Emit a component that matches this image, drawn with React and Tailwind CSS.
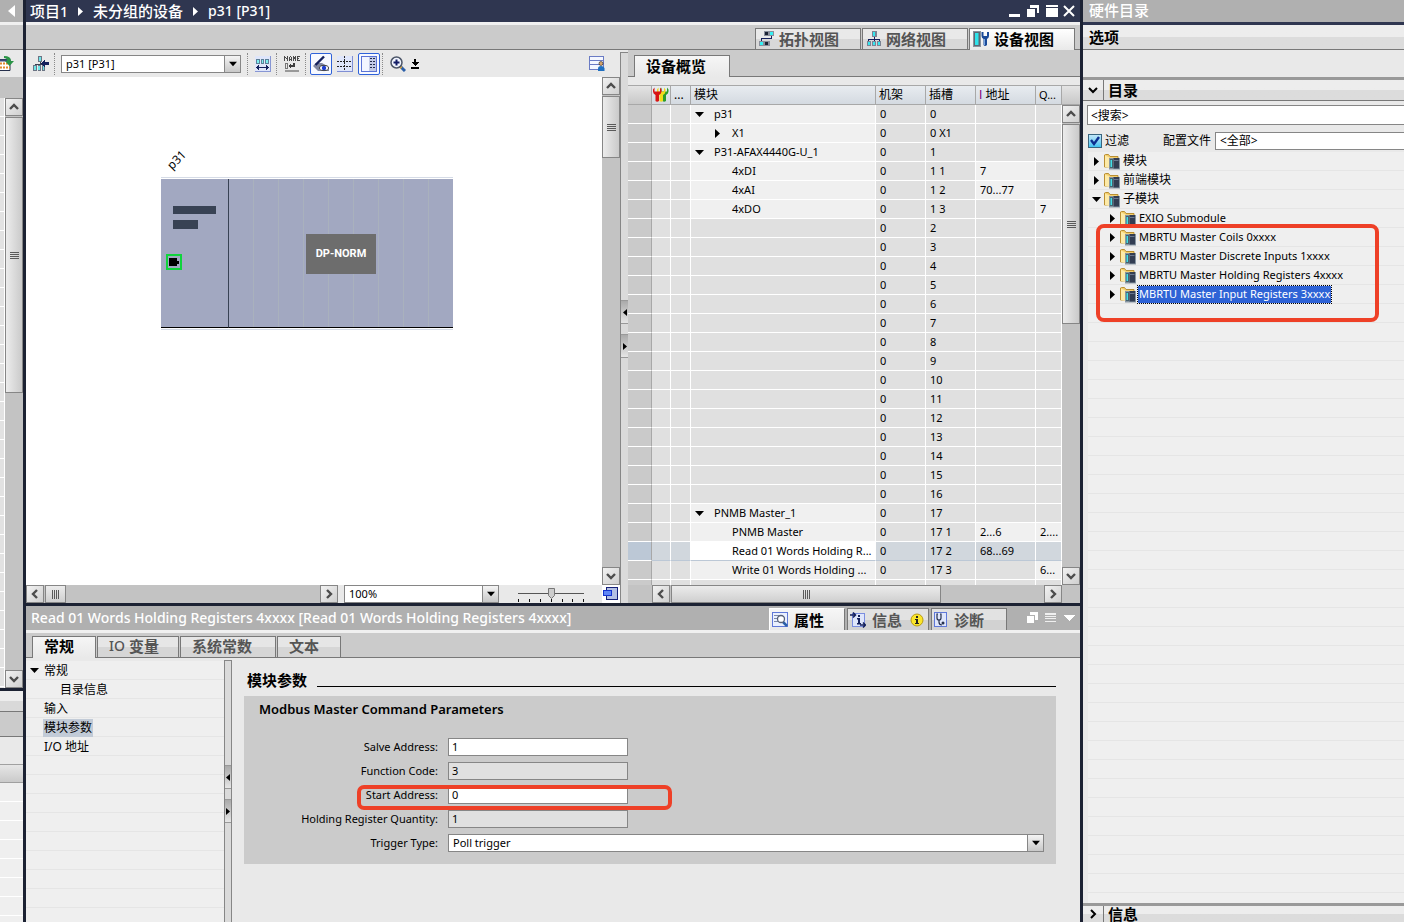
import React, { useState } from 'react';

const rows = [
  { name: 'p31', level: 0, arrow: 'down', rack: '0', slot: '0' },
  { name: 'X1', level: 1, arrow: 'right', rack: '0', slot: '0 X1' },
  { name: 'P31-AFAX4440G-U_1', level: 0, arrow: 'down', rack: '0', slot: '1' },
  { name: '4xDI', level: 1, rack: '0', slot: '1 1', iAddr: '7' },
  { name: '4xAI', level: 1, rack: '0', slot: '1 2', iAddr: '70...77' },
  { name: '4xDO', level: 1, rack: '0', slot: '1 3', qAddr: '7' },
  ...Array.from({ length: 15 }, (_, i) => ({ name: '', level: 0, rack: '0', slot: String(i + 2) })),
  { name: 'PNMB Master_1', level: 0, arrow: 'down', rack: '0', slot: '17' },
  { name: 'PNMB Master', level: 1, rack: '0', slot: '17 1', iAddr: '2...6', qAddr: '2....' },
  { name: 'Read 01 Words Holding R...', level: 1, rack: '0', slot: '17 2', iAddr: '68...69', selected: true },
  { name: 'Write 01 Words Holding ...', level: 1, rack: '0', slot: '17 3', qAddr: '6...' },
  { name: '', level: 0, rack: '', slot: '' },
];

const catalog = [
  { name: '模块', arrow: 'right' },
  { name: '前端模块', arrow: 'right' },
  { name: '子模块', arrow: 'down' },
  { name: 'EXIO Submodule', arrow: 'right', child: true },
  { name: 'MBRTU Master Coils 0xxxx', arrow: 'right', child: true },
  { name: 'MBRTU Master Discrete Inputs 1xxxx', arrow: 'right', child: true },
  { name: 'MBRTU Master Holding Registers 4xxxx', arrow: 'right', child: true },
  { name: 'MBRTU Master Input Registers 3xxxx', arrow: 'right', child: true },
];

const fields = [
  { id: 'slave', label: 'Salve Address:', value: '1' },
  { id: 'func', label: 'Function Code:', value: '3', readOnly: true },
  { id: 'start', label: 'Start Address:', value: '0', marked: true },
  { id: 'qty', label: 'Holding Register Quantity:', value: '1', readOnly: true },
];

const Arrow = ({ dir, className = '' }) => (
  <svg width="9" height="9" viewBox="0 0 9 9" className={`shrink-0 ${className}`} fill="currentColor">
    {dir === 'down' && <path d="M0 2h9L4.5 7z" />}
    {dir === 'right' && <path d="M2 0v9l5-4.5z" />}
    {dir === 'left' && <path d="M7 0v9L2 4.5z" />}
  </svg>
);

const ScrollButton = ({ dir }) => {
  const paths = {
    up: 'M4 10l4-4 4 4',
    down: 'M4 6l4 4 4-4',
    left: 'M10 4L6 8l4 4',
    right: 'M6 4l4 4-4 4',
  };
  return (
    <button aria-label={dir} className="w-[18px] h-[18px] shrink-0 border border-[#868686] bg-linear-to-br from-[#f2f2f2] to-[#cfcfcf] flex items-center justify-center">
      <svg width="16" height="16" viewBox="0 0 16 16" fill="none" stroke="#4c4c4c" strokeWidth="2.4">
        <path d={paths[dir]} />
      </svg>
    </button>
  );
};

const Thumb = ({ vertical, className = '', grip = true }) => (
  <div
    className={`shrink-0 border border-[#868686] flex items-center justify-center ${
      vertical ? 'w-[18px] bg-linear-to-r from-[#ececec] to-[#cacaca]' : 'h-[18px] bg-linear-to-b from-[#ececec] to-[#cfcfcf]'
    } ${className}`}
  >
    {grip && (
      <svg width="9" height="9" viewBox="0 0 9 9" fill="#5a5a5a">
        {[0, 2, 4, 6].map((n) => (vertical ? <rect key={n} x="0" y={n + 1} width="9" height="1" /> : <rect key={n} x={n + 1} y="0" width="1" height="9" />))}
      </svg>
    )}
  </div>
);

const Combo = ({ label, options, className = '' }) => (
  <div className={`relative h-[18px] border border-[#868686] bg-white ${className}`}>
    <select aria-label={label} className="block w-full h-full appearance-none bg-transparent pl-1 text-[11px] leading-4 outline-none">
      {options.map((o) => (
        <option key={o}>{o}</option>
      ))}
    </select>
    <span className="absolute inset-y-0 right-0 w-4 border-l border-[#868686] bg-linear-to-b from-[#f4f4f4] to-[#c8c8c8] flex items-center justify-center pointer-events-none">
      <Arrow dir="down" className="w-2 h-2" />
    </span>
  </div>
);

const Grip = ({ dir }) => (
  <button aria-label={`collapse ${dir}`} className="w-full h-6 border-y border-[#999] bg-linear-to-b from-[#aaa] to-[#e6e6e6] flex items-center justify-center">
    <svg width="4" height="7" viewBox="0 0 4 7">
      <path d={dir === 'left' ? 'M4 0v7L0 3.5z' : 'M0 0v7l4-3.5z'} />
    </svg>
  </button>
);

const Splitter = ({ className = '' }) => (
  <div className={`w-2 shrink-0 border-l border-t border-l-[#868686] border-t-[#868686] bg-[#dadada] flex flex-col items-center gap-[10px] ${className}`}>
    <Grip dir="left" />
    <Grip dir="right" />
  </div>
);

const Separator = () => <span className="h-[22px] border-l border-dotted border-[#8a8a8a] mr-[2px]" />;

const ToolButton = ({ label, active, children }) => (
  <button aria-label={label} className={`w-[22px] h-[22px] shrink-0 flex items-center justify-center ${active ? 'border border-[#2f62d9] rounded-xs bg-[#f7f9ff]' : ''}`}>
    {children}
  </button>
);

/* ---- icons ---- */

const TopologyIcon = () => (
  <svg width="16" height="16" viewBox="0 0 16 16" shapeRendering="crispEdges">
    <rect x="5" y="0" width="10" height="5" fill="#8a8f9c" />
    <rect x="6" y="1" width="3" height="3" fill="#1b2333" />
    <rect x="11" y="1" width="3" height="3" fill="#35f0f4" />
    <rect x="0" y="10" width="11" height="5" fill="#8a8f9c" />
    <rect x="1" y="11" width="3" height="3" fill="#35f0f4" />
    <rect x="6" y="11" width="3" height="3" fill="#1b2333" />
    <path d="M12.500 5v2.500h-10V10" fill="none" stroke="#14205c" />
  </svg>
);

const NetworkIcon = () => (
  <svg width="16" height="16" viewBox="0 0 16 16" shapeRendering="crispEdges">
    <rect x="6" y="0" width="5" height="6" fill="#7b8494" />
    <rect x="7" y="1" width="2" height="4" fill="#35e6ee" />
    <path d="M8.500 6v3M2.500 11V8.500h11V11M8.500 8v3" fill="none" stroke="#14205c" />
    <path d="M1 10h4v5H1zM6 10h4v5H6zM11 10h4v5h-4z" fill="#7b8494" />
    <path d="M2 11h2v3H2zM7 11h2v3H7zM12 11h2v3h-2z" fill="#35e6ee" />
  </svg>
);

const DeviceIcon = () => (
  <svg width="17" height="16" viewBox="0 0 17 16">
    <rect x="0.500" y="0.500" width="7" height="15" fill="#5f6873" stroke="#8a929c" />
    <rect x="2" y="2" width="3.500" height="12" fill="#2fe3ea" />
    <path d="M8.500 1v4q0 2 2 3v6q1.500 2 3.500 0V8q2-1 2-3V1h-2v4h-3.500V1z" fill="#1b4a98" />
    <path d="M11.500 8v6" stroke="#79a7e4" />
  </svg>
);

const GotoNetIcon = () => (
  <svg width="16" height="16" viewBox="0 0 16 16" shapeRendering="crispEdges">
    <rect x="5" y="0" width="4" height="6" fill="#6b7484" />
    <rect x="6" y="1" width="2" height="4" fill="#6fe6e8" />
    <path d="M7 6v3M2 11V8.500h7V11" fill="none" stroke="#3a4152" />
    <path d="M0 9h4v6H0zM4.500 9H8v6H4.500zM9 9h3v6H9z" fill="#6b7484" />
    <path d="M1 10h2v4H1zM5 10h2v4H5zM10 10h1v4h-1z" fill="#6fe6e8" />
    <path d="M8 7.500l4-4V6h4v3h-4v2.500z" fill="#14205c" />
  </svg>
);

const RackIcon = () => (
  <svg width="16" height="16" viewBox="0 0 16 16" shapeRendering="crispEdges">
    <rect width="16" height="16" fill="#8796d4" />
    <rect x="0" y="0" width="15" height="15" fill="#dfe6fa" />
    <path d="M1 3h4v5H1zM6 3h3v5H6zM10 3h4v5h-4z" fill="#5b7f98" />
    <path d="M2 4h2v3H2zM7 4h1v3H7zM11 4h2v3h-2z" fill="#7df0f0" />
    <path d="M1 11.500l3-2.500v2h7V9l3 2.500-3 2.500v-2H4v2z" fill="#14205c" />
  </svg>
);

const NameIcon = () => (
  <svg width="16" height="16" viewBox="0 0 16 16" shapeRendering="crispEdges">
    <path
      d="M0 0h1v5H0zM3 0h1v5H3zM1 1h1v1H1zM2 2h1v1H2zM5 1h1v4H5zM7 1h1v4H7zM6 0h1v1H6zM6 3h1v1H6zM9 0h1v5H9zM11 0h1v5h-1zM10 1h1v2h-1zM13 0h1v5h-1zM14 0h2v1h-2zM14 2h1v1h-1zM14 4h2v1h-2z"
      fill="#4a4a4a"
    />
    <path d="M1.500 7.500h2v5h-2z" fill="none" stroke="#777" />
    <path d="M4 10l3-3v2h2V7h2v4H7v2z" fill="#3c3c3c" />
    <path d="M1 14h14v2H1z" fill="#999" />
  </svg>
);

const PenEyeIcon = () => (
  <svg width="18" height="18" viewBox="0 0 18 18">
    <path d="M1 11l3-3h6l7 4v4H6z" fill="#8087a0" />
    <path d="M3.500 10L12 1.500" stroke="#14205c" strokeWidth="2.400" />
    <ellipse cx="12" cy="13" rx="4.500" ry="2.600" fill="#fff" stroke="#444" />
    <circle cx="12" cy="13" r="2.200" fill="#1d3fd0" />
  </svg>
);

const GridIcon = () => (
  <svg width="16" height="16" viewBox="0 0 16 16" shapeRendering="crispEdges">
    <rect width="16" height="16" fill="#7f8ed4" />
    <rect x="0" y="0" width="15" height="15" fill="#dfe6fb" />
    <path d="M0 5.500h15M0 10.500h15M7.500 0v15" stroke="#222" strokeDasharray="2 1" />
  </svg>
);

const PanelIcon = () => (
  <svg width="16" height="16" viewBox="0 0 16 16" shapeRendering="crispEdges">
    <rect width="16" height="16" fill="#5b73d6" />
    <rect x="1" y="1" width="7" height="14" fill="#f2f5ff" />
    <rect x="8" y="1" width="7" height="14" fill="#c3cbe6" />
    <path d="M9 2.500h2M12 2.500h2M9 5.500h2M12 5.500h2M9 8.500h2M12 8.500h2M9 11.500h2M12 11.500h2" stroke="#222c4c" />
  </svg>
);

const ZoomIcon = () => (
  <svg width="16" height="16" viewBox="0 0 16 16">
    <path d="M10 10l5 5" stroke="#2b5fa8" strokeWidth="3" />
    <path d="M9.500 10l2 2" stroke="#e0a83a" strokeWidth="2.500" />
    <circle cx="6.500" cy="6.500" r="5.500" fill="#f2f6ff" stroke="#4b5568" strokeWidth="1.500" />
    <path d="M6.500 3.500v6M3.500 6.500h6" stroke="#111b66" strokeWidth="2" />
  </svg>
);

const DownIcon = () => (
  <svg width="8" height="10" viewBox="0 0 8 10" shapeRendering="crispEdges">
    <path d="M3 0h2v3h3L4 7 0 3h3zM0 8h8v2H0z" />
  </svg>
);

const UserTableIcon = () => (
  <svg width="16" height="16" viewBox="0 0 16 16">
    <rect x="0.500" y="0.500" width="14" height="13" fill="#f4f7ff" stroke="#6a7bc4" />
    <path d="M1 4.500h13M1 8.500h13" stroke="#6a7bc4" />
    <circle cx="12" cy="7.500" r="2" fill="#d9a56b" stroke="#222" strokeWidth="0.600" />
    <path d="M9 15v-2.500q0-2.500 3-2.500t3.500 2.500V15z" fill="#1f6fc0" />
  </svg>
);

const WrenchesIcon = () => {
  const wrench = 'M1.500 0.500L0 2.500v2q0 2 2.500 3.500v6q1.500 1.500 3.500 0V8Q8.500 6.500 8.500 4.500v-2L7 .5v4H1.500z';
  return (
    <svg width="16" height="16" viewBox="0 0 16 16">
      <path d={wrench} fill="#2c9c2c" transform="translate(7 0)" />
      <path d={wrench} fill="#f0dc1c" transform="translate(4 0)" />
      <path d={wrench} fill="#d81414" />
    </svg>
  );
};

const FolderIcon = () => (
  <svg width="16" height="16" viewBox="0 0 16 16">
    <path d="M.5 13V1L1.500.5h3l1.500 2h8V13z" fill="#f5cf6c" stroke="#b98f33" />
    <path d="M1 13V1.500l4.500 2V14z" fill="#fdeaa8" />
    <rect x="5" y="4" width="11" height="11.500" fill="#8796a2" />
    <rect x="6" y="5" width="3" height="9" fill="#47626e" />
    <rect x="6.500" y="6" width="1.500" height="7" fill="#43dfe8" />
    <rect x="9.500" y="4" width="5.500" height="10.500" fill="#323d52" />
    <path d="M10 6.500h4.500" stroke="#6b7890" />
  </svg>
);

const PropsIcon = () => (
  <svg width="16" height="16" viewBox="0 0 16 16">
    <rect x="0.500" y="0.500" width="15" height="14" fill="#eaf0ff" stroke="#5f78d8" />
    <path d="M2 3.500h5M2 6.500h3M2 9.500h4" stroke="#7d8aa8" />
    <path d="M11 10l4 4" stroke="#2b5fa8" strokeWidth="2.500" />
    <circle cx="9" cy="7" r="3.500" fill="#fff" stroke="#566078" strokeWidth="1.300" />
  </svg>
);

const InfoTabIcon = () => (
  <svg width="16" height="16" viewBox="0 0 16 16">
    <rect x="2.500" y="1.500" width="12" height="13" fill="#dfe6fb" stroke="#7b8ee0" />
    <path d="M0 3h5M3 .5L5.500 3 3 5.500M10 13h5M13 10.500l2.500 2.500-2.500 2.500" fill="none" stroke="#14205c" strokeWidth="1.500" />
    <path d="M8 3h2v2H8zM7 6h3v5h1v1.500H7V11h1V7.500H7z" fill="#14205c" />
  </svg>
);

const DiagIcon = () => (
  <svg width="14" height="16" viewBox="0 0 14 16">
    <rect x="0.500" y="0.500" width="12" height="14" fill="#dfe6fb" stroke="#5f78d8" />
    <path d="M4 2H3v4q0 2 2 2t2-2V2H6M5 8v2q0 3 3 3" fill="none" stroke="#26304c" strokeWidth="1.200" />
    <circle cx="9" cy="11" r="1.500" fill="#26304c" />
  </svg>
);

const InfoBadge = () => (
  <svg width="14" height="14" viewBox="0 0 14 14">
    <circle cx="7" cy="7" r="6" fill="#fbe62a" stroke="#b89b15" />
    <path d="M6 3h2v2H6zM5 6h3v4h1v1H5v-1h1V7H5z" fill="#222" />
  </svg>
);

const ExportIcon = () => (
  <svg width="14" height="16" viewBox="0 0 14 16">
    <path d="M-1 3.500h11v11H-1z" fill="#fff" stroke="#26304c" />
    <path d="M0 7.500h10M0 11.500h10" stroke="#e08a2c" strokeWidth="2" strokeDasharray="2 1" />
    <path d="M0 4.500h9" stroke="#3a4a78" strokeWidth="2" />
    <path d="M4 0q7 0 7 5h3l-4.500 5L5 5h2q0-3-3-3z" fill="#2a9446" />
  </svg>
);

const FitIcon = () => (
  <svg width="16" height="16" viewBox="0 0 16 16" shapeRendering="crispEdges">
    <rect x="3.500" y="1.500" width="11" height="12" fill="#b3c0e4" stroke="#14207a" />
    <rect x="0.500" y="4.500" width="8" height="5" fill="#5f86f5" stroke="#1433d0" />
  </svg>
);

const ViewTab = ({ icon, active, children }) => (
  <button
    className={`w-[106px] border border-[#787878] flex items-center pl-[3px] pb-px gap-1 text-[15px] leading-5 font-bold ${
      active ? 'h-[22px] -mb-px border-b-0 bg-linear-to-b from-white to-[#e9e9e9] text-black' : 'h-[22px] -mb-px bg-linear-to-b from-[#e9e9e9] from-50% to-[#d8d8d8] to-50% text-[#555]'
    }`}
  >
    {icon}
    <span className="whitespace-nowrap">{children}</span>
  </button>
);

const LeftStrip = () => (
  <div className="w-[23px] shrink-0 flex flex-col overflow-hidden bg-[#e9e9e9]">
    <div className="h-[22px] shrink-0 bg-[#b0b0b0] flex items-center justify-end pr-2 text-white">
      <svg width="7" height="12" viewBox="0 0 7 12" fill="currentColor">
        <path d="M7 0v12L0 6z" />
      </svg>
    </div>
    <div className="h-[28px] shrink-0 border-t-3 border-[#f0f0f0] bg-[#cbcbcb] shadow-[inset_0_-1px_#787878]" />
    <div className="h-[27px] shrink-0 flex items-center">
      <ExportIcon />
    </div>
    <div className="h-[21px] shrink-0 bg-[#c3c3c3]" />
    <div className="flex-1 min-h-0 flex bg-[#c3c3c3]">
      <div className="w-[5px] border-r border-white bg-[repeating-linear-gradient(#e2e2e2_0_18px,#fff_18px_19px)]" />
      <div className="flex-1 flex flex-col">
        <ScrollButton dir="up" />
        <Thumb vertical className="h-[276px] mt-px" />
        <div className="flex-1" />
        <ScrollButton dir="down" />
      </div>
    </div>
    <div className="h-[234px] shrink-0 border-t-3 border-[#1c2233] flex flex-col">
      <div className="h-[21px] shrink-0 border-b border-[#787878] bg-linear-to-b from-[#ededed] from-50% to-[#d9d9d9] to-50%" />
      <div className="h-[25px] shrink-0 border-b border-[#787878] bg-[#cbcbcb]" />
      <div className="h-[27px] shrink-0" />
      <div className="h-[19px] shrink-0 border-y border-[#a0a0a0] bg-linear-to-b from-[#e6e6e6] to-[#cacaca]" />
      <div className="flex-1 bg-[repeating-linear-gradient(#efefef_0_18px,#fff_18px_19px)]" />
    </div>
  </div>
);

const DeviceCanvas = () => (
  <div className="flex-1 min-w-0 flex flex-col bg-[#e9e9e9]">
    <div className="h-[27px] shrink-0 flex items-center gap-[2px] pl-1 pr-[15px]">
      <ToolButton label="network">
        <GotoNetIcon />
      </ToolButton>
      <Separator />
      <Combo label="device" options={['p31 [P31]']} className="w-[180px] ml-[2px] mr-1" />
      <Separator />
      <ToolButton label="rack">
        <RackIcon />
      </ToolButton>
      <Separator />
      <ToolButton label="name">
        <NameIcon />
      </ToolButton>
      <Separator />
      <ToolButton label="show labels" active>
        <PenEyeIcon />
      </ToolButton>
      <ToolButton label="grid">
        <GridIcon />
      </ToolButton>
      <ToolButton label="overview" active>
        <PanelIcon />
      </ToolButton>
      <Separator />
      <ToolButton label="zoom">
        <ZoomIcon />
      </ToolButton>
      <DownIcon />
      <div className="flex-1" />
      <UserTableIcon />
    </div>

    <div className="flex-1 min-h-0 flex">
      <div className="flex-1 min-w-0 bg-white relative overflow-hidden">
        <span className="absolute left-[140px] top-[75px] -rotate-45 text-[12px] leading-4">p31</span>
        <div className="absolute left-[135px] top-[100px] w-[292px] h-[153px] border-y border-[#d5dbe6] py-px flex">
          <div className="w-[68px] bg-[#a2a8c1] border-r border-r-[#384254] border-b border-b-black pl-3 pt-[27px]">
            <div className="w-[43px] h-2 bg-[#384254]" />
            <div className="w-[25px] h-[9px] mt-[6px] bg-[#384254]" />
            <div className="-ml-[7px] mt-[25px] w-4 h-4 border-2 border-[#10d43c] bg-[#a2a8c1] flex items-center pl-px">
              <div className="w-2 h-2 bg-black" />
              <div className="w-[2px] h-[3px] bg-black" />
            </div>
          </div>
          <div className="flex-1 border-b border-black bg-[repeating-linear-gradient(to_right,#a2a8c1_0_24px,#a9b1bd_24px_25px)] pl-[77px] pt-[55px]">
            <div className="w-[70px] h-10 bg-[#6d6d6d] text-white text-[11px] font-bold font-['Roboto',sans-serif] flex items-center justify-center">DP-NORM</div>
          </div>
        </div>
      </div>
      <div className="w-[18px] flex flex-col bg-[#c3c3c3]">
        <ScrollButton dir="up" />
        <Thumb vertical className="h-[62px] mt-px" />
        <div className="flex-1" />
        <ScrollButton dir="down" />
      </div>
    </div>

    <div className="h-[18px] shrink-0 flex items-center">
      <div className="w-[312px] flex bg-[#c3c3c3]">
        <ScrollButton dir="left" />
        <Thumb className="w-[21px] ml-px" />
        <div className="flex-1" />
        <ScrollButton dir="right" />
      </div>
      <Combo label="zoom" options={['100%']} className="w-[155px] ml-[6px]" />
      <div className="relative ml-[19px] w-[66px] h-[18px]">
        <svg width="66" height="18" viewBox="0 0 66 18">
          <path d="M0 8.500h66" stroke="#555" />
          <path d="M.5 14v3M11.500 14v3M22.500 14v3M33.500 14v3M44.500 14v3M54.500 14v3M65.500 14v3" stroke="#111" />
          <path d="M30.500 3.500h6v7l-3 3-3-3z" fill="#ccc" stroke="#777" />
        </svg>
        <input type="range" aria-label="zoom level" className="absolute inset-0 w-full opacity-0" />
      </div>
      <div className="flex-1" />
      <div className="w-[18px] h-[18px] bg-white flex items-center justify-center">
        <FitIcon />
      </div>
    </div>
  </div>
);

const OverviewTable = () => {
  const th = 'h-[20px] border-y border-[#a8a8a8] border-r text-left font-normal pl-[3px] text-[12px] leading-4 whitespace-nowrap';
  const td = 'h-[19px] border-b border-r border-white pl-1 leading-4 whitespace-nowrap overflow-hidden';

  return (
    <div className="w-[452px] shrink-0 flex flex-col bg-[#e9e9e9]">
      <div className="h-[27px] shrink-0 bg-[#cbcbcb] shadow-[inset_0_-1px_#787878] flex items-end pl-[6px]">
        <button className="w-24 h-[22px] border border-b-0 border-[#787878] bg-linear-to-b from-[#f6f6f6] to-[#e9e9e9] text-[15px] leading-5 font-bold pr-3 pb-px text-center">设备概览</button>
      </div>
      <div className="flex-1 min-h-0 flex pt-2">
        <div className="flex-1 min-w-0 overflow-hidden">
          <table className="w-full table-fixed border-separate border-spacing-0 text-[11px]">
            <colgroup>
              <col className="w-[24px]" />
              <col className="w-[19px]" />
              <col className="w-[20px]" />
              <col />
              <col className="w-[50px]" />
              <col className="w-[50px]" />
              <col className="w-[60px]" />
              <col className="w-[26px]" />
            </colgroup>
            <thead className="bg-linear-to-b from-[#e9edf1] to-[#d3d9e0]">
              <tr>
                <th className={`${th} bg-linear-to-b from-[#e4e4e4] to-[#c8c8c8]`} />
                <th className={`${th} pl-px! pr-0`}>
                  <WrenchesIcon />
                </th>
                <th className={th}>...</th>
                <th className={th}>模块</th>
                <th className={th}>机架</th>
                <th className={th}>插槽</th>
                <th className={th}>
                  <span className="text-[#800080] font-['Liberation_Sans',sans-serif]">I</span> 地址
                </th>
                <th className={th}>
                  <span className="text-[11px]">Q...</span>
                </th>
              </tr>
            </thead>
            <tbody>
              {rows.map((row, index) => {
                const base = row.selected ? 'bg-[#d1d7dd] border-b-[#bcc8d6]!' : 'bg-[#e0e0e0]';
                const filled = row.selected ? base : 'bg-[#f0f0f0]';
                return (
                  <tr key={index}>
                    <td className={`${td} border-r-[#a8a8a8]! ${row.selected ? 'bg-[#bcc8d6]' : 'bg-[#cacaca]'}`} />
                    <td className={`${td} ${base}`} />
                    <td className={`${td} ${base}`} />
                    <td className={`${td} pr-0 ${row.selected ? 'bg-white border-b-[#bcc8d6]!' : row.name ? 'bg-[#f0f0f0]' : 'bg-[#e0e0e0]'}`}>
                      <div className={`flex items-center ${row.level ? 'pl-[18px]' : ''}`}>
                        <span className="w-[19px] shrink-0">{row.arrow && <Arrow dir={row.arrow} />}</span>
                        {row.name}
                      </div>
                    </td>
                    <td className={`${td} ${base}`}>{row.rack}</td>
                    <td className={`${td} ${base}`}>{row.slot}</td>
                    <td className={`${td} ${row.iAddr ? filled : base}`}>{row.iAddr}</td>
                    <td className={`${td} ${row.qAddr ? filled : base}`}>{row.qAddr}</td>
                  </tr>
                );
              })}
            </tbody>
          </table>
        </div>
        <div className="w-[18px] shrink-0 flex flex-col bg-[#c3c3c3]">
          <div className="h-[20px] shrink-0 border-y border-[#a8a8a8] bg-linear-to-b from-[#e4e4e4] to-[#c8c8c8]" />
          <ScrollButton dir="up" />
          <Thumb vertical className="h-[200px] mt-px" />
          <div className="flex-1" />
          <ScrollButton dir="down" />
        </div>
      </div>
      <div className="h-[18px] shrink-0 flex pl-6 pr-[18px] bg-[#c3c3c3]">
        <ScrollButton dir="left" />
        <Thumb className="w-[270px] ml-px" />
        <div className="flex-1" />
        <ScrollButton dir="right" />
      </div>
    </div>
  );
};

const PropTab = ({ active, className = '', children }) => (
  <button
    className={`h-[22px] border border-b-0 flex items-center gap-[6px] pl-[2px] text-[15px] leading-5 font-bold ${
      active ? 'border-white border-r-[#787878] bg-linear-to-b from-[#f6f6f6] to-[#e9e9e9]' : 'border-[#787878] bg-linear-to-b from-[#e2e2e2] from-50% to-[#d2d2d2] to-50% text-[#555]'
    } ${className}`}
  >
    {children}
  </button>
);

const Properties = () => {
  const tabs = [
    { name: '常规', size: 'w-[64px]', active: true },
    { prefix: 'IO', name: '变量', size: 'w-[82px]' },
    { name: '系统常数', size: 'w-[96px]' },
    { name: '文本', size: 'w-[64px]' },
  ];
  const nav = [
    { name: '常规', arrow: true },
    { name: '目录信息', child: true },
    { name: '输入' },
    { name: '模块参数', selected: true },
    { name: 'I/O 地址' },
  ];
  const [values, setValues] = useState({ slave: '1', func: '3', start: '0', qty: '1' });

  return (
    <div className="h-[319px] shrink-0 border-t-3 border-[#1c2233] bg-[#e9e9e9] flex flex-col">
      <div className="h-[24px] shrink-0 bg-[#b0b0b0] flex items-end pl-[5px] pr-1 text-white">
        <h2 className="flex-1 min-w-0 self-center text-[14px] leading-5 font-medium whitespace-nowrap">Read 01 Words Holding Registers 4xxxx [Read 01 Words Holding Registers 4xxxx]</h2>
        <div className="flex gap-[2px] text-black">
          <PropTab active className="w-[76px]">
            <PropsIcon />
            属性
          </PropTab>
          <PropTab className="w-[82px]">
            <InfoTabIcon />
            信息
            <span className="ml-[2px]">
              <InfoBadge />
            </span>
          </PropTab>
          <PropTab className="w-[76px]">
            <DiagIcon />
            诊断
          </PropTab>
        </div>
        <svg width="50" height="12" viewBox="0 0 50 12" className="ml-[19px] self-center" fill="#fff" shapeRendering="crispEdges">
          <path d="M4 0h8v8H9V3H4zM1 4h7v7H1z" />
          <path d="M19 1h11v2H19zM19 4h11v1H19zM19 6h11v1H19zM19 9h11v1H19z" opacity="0.800" />
          <path d="M37 3h12l-6 6z" />
        </svg>
      </div>
      <div className="h-[28px] shrink-0 border-t-3 border-[#f0f0f0] bg-[#cbcbcb] shadow-[inset_0_-1px_#787878] flex items-end pl-[6px] gap-px">
        {tabs.map((t) => (
          <button
            key={t.name}
            className={`h-[22px] border border-[#787878] text-[15px] leading-5 font-bold text-left pl-[11px] pb-[2px] flex items-center gap-1 ${t.size} ${
              t.active ? 'border-b-transparent bg-linear-to-b from-[#f6f6f6] to-[#e9e9e9] bg-origin-border' : 'bg-linear-to-b from-[#e6e6e6] from-50% to-[#d6d6d6] to-50% text-[#555]'
            }`}
          >
            {t.prefix && <span className="text-[14px] font-medium">{t.prefix}</span>}
            {t.name}
          </button>
        ))}
      </div>

      <div className="flex-1 min-h-0 flex pt-[2px]">
        <ul className="mt-px w-[198px] shrink-0 bg-[repeating-linear-gradient(#efefef_0_18px,#e5e5e5_18px_19px)] text-[12px]">
          {nav.map((n) => (
            <li key={n.name} className="h-[19px] flex items-center pl-1">
              <span className="w-[13px] shrink-0">{n.arrow && <Arrow dir="down" />}</span>
              <a href="#" className={`h-[18px] leading-[18px] px-[1px] ${n.child ? 'ml-4' : ''} ${n.selected ? 'bg-[#c2cbd7]' : ''}`}>
                {n.name}
              </a>
            </li>
          ))}
        </ul>
        <Splitter className="pt-[104px] border-r border-r-[#868686]" />
        <div className="flex-1 min-w-0 pl-3 pr-6 pt-[10px]">
          <div className="flex items-end gap-[10px] pl-[3px]">
            <h3 className="text-[15px] leading-5 font-bold">模块参数</h3>
            <div className="flex-1 border-b border-black mb-[3px]" />
          </div>
          <div className="mt-[6px] h-[168px] bg-[#cbcbcb] pl-[15px] pr-3 pt-[3px]">
            <h4 className="text-[13px] leading-5 font-semibold mb-[19px]">Modbus Master Command Parameters</h4>
            <div className="flex flex-col gap-[6px] text-[11px]">
              {fields.map((f) => (
                <div key={f.id} className="h-[18px] flex items-center relative">
                  <label htmlFor={f.id} className="w-[179px] text-right">
                    {f.label}
                  </label>
                  <input
                    id={f.id}
                    value={values[f.id]}
                    readOnly={f.readOnly}
                    onChange={(e) => setValues({ ...values, [f.id]: e.target.value })}
                    className={`ml-[10px] w-[180px] h-[18px] border border-[#868686] pl-[3px] pb-px outline-none ${f.readOnly ? 'bg-[#e0e0e0]' : 'bg-white'}`}
                  />
                  {f.marked && <div className="absolute left-[98px] -top-px w-[315px] h-[25px] border-4 border-[#ee4027] rounded-[7px] pointer-events-none" />}
                </div>
              ))}
              <div className="h-[18px] flex items-center">
                <span className="w-[179px] text-right">Trigger Type:</span>
                <Combo label="Trigger Type" options={['Poll trigger']} className="ml-[10px] flex-1" />
              </div>
            </div>
          </div>
        </div>
      </div>
    </div>
  );
};

const Catalog = () => {
  const bar = 'shrink-0 bg-linear-to-b from-[#ededed] from-50% to-[#dcdcdc] to-50% flex items-center';
  return (
    <aside className="w-[321px] shrink-0 flex flex-col bg-[#e9e9e9]">
      <div className="h-[25px] shrink-0 bg-[#b0b0b0] border-b-3 border-[#2f3650] text-white text-[15px] leading-5 font-medium pl-[6px]">硬件目录</div>
      <div className={`${bar} h-[25px] border-b border-[#787878] pl-[6px] text-[15px] font-bold`}>选项</div>
      <div className="h-[27px] shrink-0" />
      <div className={`${bar} h-[24px] border-t-3 border-t-[#999] border-b border-b-[#787878] text-[15px] leading-5 font-bold`}>
        <button aria-label="collapse" className="w-[21px] h-full border-r border-[#787878] flex items-center justify-center">
          <svg width="10" height="8" viewBox="0 0 10 8" fill="none" stroke="#000" strokeWidth="2">
            <path d="M1 2l4 4 4-4" />
          </svg>
        </button>
        <span className="pl-1">目录</span>
      </div>
      <div className="pl-1 pt-1 shrink-0">
        <input aria-label="search" defaultValue="<搜索>" className="block w-full h-5 border border-r-0 border-[#868686] bg-white pl-[3px] text-[12px] outline-none" />
      </div>
      <div className="h-[27px] shrink-0 flex items-center pl-[5px] text-[12px] pt-1">
        <div className="relative w-[14px] h-[14px]">
          <input id="filter" type="checkbox" defaultChecked className="block appearance-none w-[14px] h-[14px] border border-[#39647f] bg-linear-to-b from-[#bfe6f8] to-[#3fc4f2]" />
          <svg width="14" height="14" viewBox="0 0 14 14" className="absolute inset-0 pointer-events-none" fill="none" stroke="#0d2f8f" strokeWidth="2.400">
            <path d="M3 6l3 4 5-7" />
          </svg>
        </div>
        <label htmlFor="filter" className="w-[61px] pl-[3px]">
          过滤
        </label>
        <label htmlFor="profile" className="w-[52px] whitespace-nowrap">
          配置文件
        </label>
        <select id="profile" className="flex-1 h-[18px] appearance-none border border-r-0 border-[#868686] bg-white pl-1 text-[12px] leading-4 outline-none">
          <option>&lt;全部&gt;</option>
        </select>
      </div>

      <div className="relative flex-1 min-h-0 pl-[5px]">
        <ul className="h-full bg-[repeating-linear-gradient(#efefef_0_18px,#e5e5e5_18px_19px)] text-[12px]">
          {catalog.map((item) => (
            <li key={item.name} className={`h-[19px] flex items-center ${item.child ? 'pl-5 text-[11px]' : 'pl-1'}`}>
              <Arrow dir={item.arrow} className="mr-[3px]" />
              <FolderIcon />
              <span
                className={`ml-[2px] px-px h-[17px] leading-4 whitespace-nowrap ${
                  item.name.includes('Input Registers') ? 'bg-[#2e63d6] text-white outline outline-dotted outline-black' : ''
                }`}
              >
                {item.name}
              </span>
            </li>
          ))}
        </ul>
        <div className="absolute left-[13px] top-[72px] w-[283px] h-[98px] border-4 border-[#ee4027] rounded-[8px] pointer-events-none" />
      </div>

      <div className={`${bar} h-[19px] border-t-3 border-t-[#999] text-[15px] leading-4 font-bold`}>
        <button aria-label="expand" className="w-[21px] h-full border-r border-[#787878] flex items-center justify-center">
          <svg width="8" height="10" viewBox="0 0 8 10" fill="none" stroke="#000" strokeWidth="2">
            <path d="M2 1l4 4-4 4" />
          </svg>
        </button>
        <span className="pl-1">信息</span>
      </div>
    </aside>
  );
};

const App = () => {
  return (
    <div lang="zh-CN" className="h-screen flex gap-[3px] bg-[#1c2233] overflow-hidden text-black font-['Noto_Sans','Noto_Sans_CJK_SC',sans-serif]">
      <LeftStrip />
      <main className="flex-1 min-w-0 flex flex-col">
        <div className="h-[22px] shrink-0 bg-[#2f3650] text-white flex items-center pl-1 pr-[5px] text-[15px] leading-5 font-medium">
          <span>
            项目<span className="text-[14px]">1</span>
          </span>
          <Arrow dir="right" className="mx-2" />
          <span>未分组的设备</span>
          <Arrow dir="right" className="mx-2" />
          <span className="text-[14px]">p31 [P31]</span>
          <div className="flex-1" />
          <svg width="67" height="14" viewBox="0 0 67 14" fill="#fff">
            <path d="M1 10h11v3H1zM22 1h9v8h-2V4h-7zM19 5h8v8h-8zM38 1h12v2H38zM38 4h12v9H38z" shapeRendering="crispEdges" />
            <path d="M56 2l10 10M66 2L56 12" stroke="#fff" strokeWidth="2" />
          </svg>
        </div>
        <div className="h-[28px] shrink-0 border-t-3 border-[#f0f0f0] bg-[#cbcbcb] shadow-[inset_0_-1px_#787878] flex items-end justify-end gap-px pr-[5px] pb-px">
          <ViewTab icon={<TopologyIcon />}>拓扑视图</ViewTab>
          <ViewTab icon={<NetworkIcon />}>网络视图</ViewTab>
          <ViewTab icon={<DeviceIcon />} active>
            设备视图
          </ViewTab>
        </div>
        <div className="flex-1 min-h-0 flex bg-[#e9e9e9]">
          <DeviceCanvas />
          <Splitter className="mt-[2px] pt-[247px]" />
          <OverviewTable />
        </div>
        <Properties />
      </main>
      <Catalog />
    </div>
  );
};

export default App;
